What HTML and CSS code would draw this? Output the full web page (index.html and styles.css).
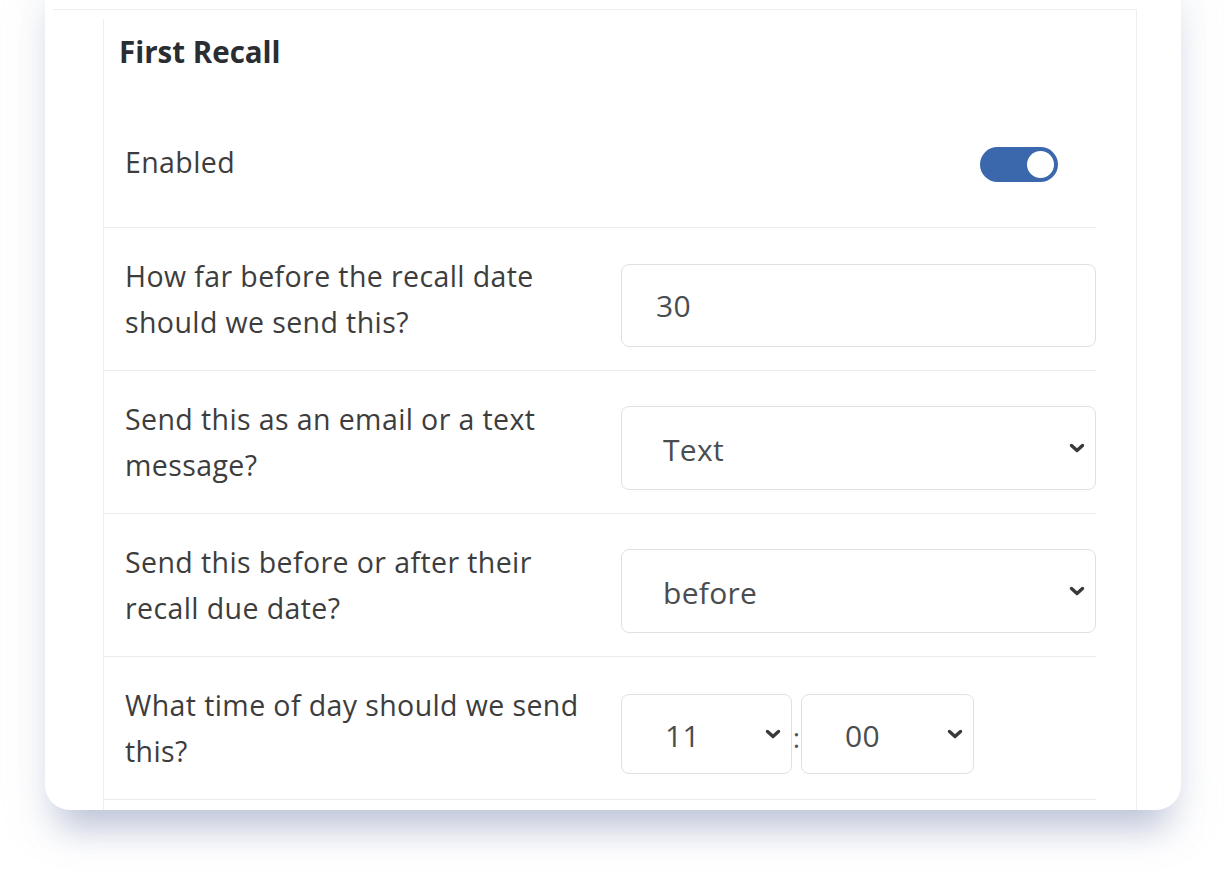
FILE: index.html
```html
<!DOCTYPE html>
<html lang="en">
<head>
<meta charset="utf-8">
<title>First Recall</title>
<link rel="stylesheet" href="styles.css">
</head>
<body>
<div class="card">
  <div class="panel">
    <div class="section">
      <h2 class="title">First Recall</h2>
      <div class="row-toggle">
        <span class="label">Enabled</span>
        <span class="switch"><span class="knob"></span></span>
      </div>
      <div class="row">
        <div class="label">How far before the recall date should we send this?</div>
        <div class="control"><div class="field field-input">30</div></div>
      </div>
      <div class="row">
        <div class="label">Send this as an email or a text message?</div>
        <div class="control">
          <div class="field field-select">
            <span class="value">Text</span>
            <svg class="chev" viewBox="0 0 16 10" width="16" height="10"><path d="M2.5 2.5 L8 7.5 L13.5 2.5"/></svg>
          </div>
        </div>
      </div>
      <div class="row">
        <div class="label">Send this before or after their recall due date?</div>
        <div class="control">
          <div class="field field-select">
            <span class="value">before</span>
            <svg class="chev" viewBox="0 0 16 10" width="16" height="10"><path d="M2.5 2.5 L8 7.5 L13.5 2.5"/></svg>
          </div>
        </div>
      </div>
      <div class="row">
        <div class="label">What time of day should we send this?</div>
        <div class="control time">
          <div class="field field-time">
            <span class="value">11</span>
            <svg class="chev" viewBox="0 0 16 10" width="16" height="10"><path d="M2.5 2.5 L8 7.5 L13.5 2.5"/></svg>
          </div>
          <span class="colon">:</span>
          <div class="field field-time field-min">
            <span class="value">00</span>
            <svg class="chev" viewBox="0 0 16 10" width="16" height="10"><path d="M2.5 2.5 L8 7.5 L13.5 2.5"/></svg>
          </div>
        </div>
      </div>
    </div>
  </div>
</div>
</body>
</html>
```

FILE: styles.css
```css
html, body {
  margin: 0;
  padding: 0;
  background: #ffffff;
}

body {
  font-family: "Open Sans", "Noto Sans", sans-serif;
  color: #333333;
  height: 895px;
  overflow: hidden;
}

.card {
  margin-top: -30px;
  margin-left: 45px;
  width: 1136px;
  height: 840px;
  box-sizing: border-box;
  padding: 39px 0 0 8px;
  background: #ffffff;
  border-radius: 25px;
  box-shadow: 0 32px 34px -16px rgba(150, 160, 192, 0.55), 0 16px 44px rgba(170, 178, 205, 0.26);
  overflow: hidden;
}

.panel {
  width: 1084px;
  height: 801px;
  box-sizing: border-box;
  border-top: 1px solid #eceef1;
  border-right: 1px solid #eceef1;
  padding-top: 9px;
}

.section {
  margin-left: 50px;
  height: 100%;
  box-sizing: border-box;
  border-left: 1px solid #eceef1;
  padding-right: 40px;
}

.title {
  margin: 0;
  padding: 13px 0 0 15px;
  font-size: 29.5px;
  line-height: 40px;
  font-weight: 700;
  color: #2a2d31;
}

.label {
  font-size: 28.5px;
  line-height: 46px;
  letter-spacing: 0.4px;
  color: #3d3d3d;
}

.row-toggle {
  height: 156px;
  box-sizing: border-box;
  padding: 24px 38px 0 21px;
  border-bottom: 1px solid #ebebeb;
  display: flex;
  align-items: center;
  justify-content: space-between;
}

.switch {
  margin-top: 6px;
  width: 78px;
  height: 35px;
  border-radius: 18px;
  background: #3b67ac;
  display: flex;
  align-items: center;
  justify-content: flex-end;
  padding-right: 4px;
  box-sizing: border-box;
}

.knob {
  width: 27px;
  height: 27px;
  border-radius: 50%;
  background: #ffffff;
}

.row {
  height: 143px;
  box-sizing: border-box;
  padding-left: 21px;
  border-bottom: 1px solid #ebebeb;
  display: grid;
  grid-template-columns: 496px 1fr;
  align-items: center;
}

.row .label {
  max-width: 470px;
}

.control {
  margin-top: 12px;
  display: flex;
  align-items: center;
}

.field {
  box-sizing: border-box;
  border: 1px solid #dfe1e4;
  border-radius: 8px;
  background: #ffffff;
  font-size: 30px;
  letter-spacing: 0.3px;
  color: #4a4d50;
  display: flex;
  align-items: center;
}

.field-input {
  width: 475px;
  height: 83px;
  padding-left: 34px;
}

.field-select {
  width: 475px;
  height: 84px;
  padding: 0 10px 0 41px;
  justify-content: space-between;
}

.field .value {
  padding-top: 3px;
}

.field-time {
  width: 171px;
  height: 80px;
  padding: 0 10px 0 43px;
  justify-content: space-between;
}

.field-min {
  width: 173px;
}

.chev {
  fill: none;
  stroke: #3a3a3a;
  stroke-width: 3.4;
  stroke-linecap: round;
  stroke-linejoin: round;
}

.colon {
  width: 9px;
  text-align: center;
  font-size: 28px;
  color: #555;
  padding-top: 6px;
}
```
